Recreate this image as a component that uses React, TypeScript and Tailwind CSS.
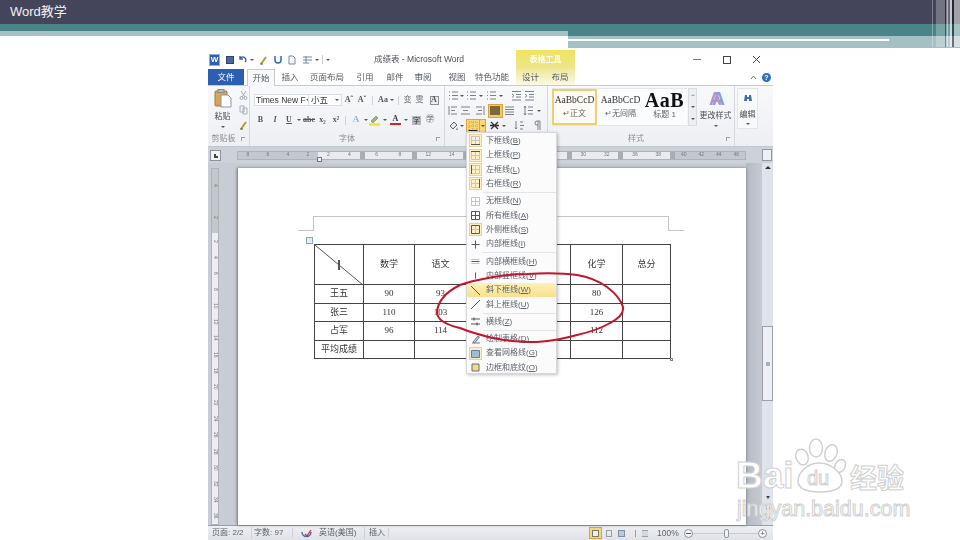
import React from 'react';

const CJK = "font-['Liberation_Sans','Noto_Sans_CJK_SC',sans-serif]";

function Cell({ className = '', children }: { className?: string; children?: React.ReactNode }) {
  return <div className={`flex items-center justify-center shrink-0 h-full ${className}`}>{children}</div>;
}

function Caret() {
  return <span className="block w-0 h-0 border-x-[2px] border-x-transparent border-t-[2px] border-t-[#555]" />;
}

function Lines({ kind }: { kind: string }) {
  const c = '#7b7f88';
  return (
    <svg width="11" height="11" viewBox="0 0 11 11" fill="none" stroke={c} strokeWidth="1">
      {kind === 'left' && <path d="M1 1v9M3 2h6M3 5.500h4M3 9h6" />}
      {kind === 'center' && <path d="M1 2h9M3 5.500h5M1 9h9" />}
      {kind === 'right' && <path d="M10 1v9M2 2h6M4 5.500h4M2 9h6" />}
      {kind === 'justify' && <path d="M1 2h9M1 4.500h9M1 7h9M1 9.500h9" />}
      {kind === 'bullet' && <path d="M1 2h1M4 2h6M1 5.500h1M4 5.500h6M1 9h1M4 9h6" />}
      {kind === 'indent' && <path d="M1 1.500h9M5 4.500h5M5 7h5M1 10h9M1 4l2 1.700L1 7.500" />}
      {kind === 'spacing' && <path d="M2 1v9M1 2.500L2 1l1 1.500M1 8.500L2 10l1-1.500M5 2h5M5 5.500h5M5 9h5" />}
      {kind === 'sort' && <path d="M2 1v8M1 7.500L2 9l1-1.500M6 2h3M6 5.500h4M6 9h3" />}
      {kind === 'mark' && <path d="M6 1v9M8 1v9M5 1H8M5 1a2 2 0 000 4h1" />}
      {kind === 'cross' && <path d="M2 2l7 7M9 2L2 9M1 5.500h9" strokeWidth="1.300" stroke="#333" />}
    </svg>
  );
}

function BorderIcon({ kind, active }: { kind: string; active?: boolean }) {
  const dim = '#c3c5ca';
  const dark = '#55575e';
  return (
    <div className={`w-[13px] h-[13px] flex items-center justify-center ${active ? 'bg-[#fdf0c8] border border-[#efcf8f]' : ''}`}>
      <svg width="11" height="11" viewBox="0 0 11 11" fill="none" strokeWidth="1">
        {!['slash', 'back', 'hline', 'draw', 'grid', 'shade', 'inner', 'ih', 'iv', 'all'].includes(kind) && (
          <path d="M1.500 1.500h8v8h-8zM1.500 5.500h8M5.500 1.500v8" stroke={dim} />
        )}
        {kind === 'bottom' && <path d="M1 9.500h9" stroke={dark} />}
        {kind === 'top' && <path d="M1 1.500h9" stroke={dark} />}
        {kind === 'left' && <path d="M1.500 1v9" stroke={dark} />}
        {kind === 'right' && <path d="M9.500 1v9" stroke={dark} />}
        {kind === 'all' && <path d="M1.500 1.500h8v8h-8zM1.500 5.500h8M5.500 1.500v8" stroke={dark} />}
        {kind === 'out' && <path d="M1.500 1.500h8v8h-8z" stroke={dark} />}
        {kind === 'inner' && <path d="M1.500 5.500h8M5.500 1.500v8" stroke={dark} />}
        {kind === 'ih' && <path d="M1.500 3.500h8M1.500 7.500h8" stroke={dim} />}
        {kind === 'ih' && <path d="M1.500 5.500h8" stroke={dark} />}
        {kind === 'iv' && <path d="M5.500 2.500v6" stroke={dark} />}
        {kind === 'slash' && <path d="M1 1l9 9" stroke={dark} />}
        {kind === 'back' && <path d="M1 10l9-9" stroke={dark} />}
        {kind === 'hline' && <path d="M1 3h9M1 8h9M4 1.500v3M7 6.500v3" stroke={dark} strokeWidth="1.200" />}
        {kind === 'draw' && <path d="M2 9h8M3 8l5-6 1.500 1-5 6z" stroke="#6f7a88" fill="#bcd0e6" />}
        {kind === 'grid' && <path d="M1.500 2.500h8v7h-8z" stroke="#5c7ea8" fill="#9fbbd8" />}
        {kind === 'shade' && <path d="M2 2h7v7H2z" stroke="#6c6f75" fill="#f3d98b" />}
      </svg>
    </div>
  );
}

function MenuItem({ icon, label, hot, active, selected }: { icon: string; label: string; hot: string; active?: boolean; selected?: boolean }) {
  return (
    <div className={`flex items-center h-[14.4px] ${selected ? 'bg-gradient-to-b from-[#fdf1b8] to-[#fae08c]' : ''}`}>
      <div className="w-[16px] flex justify-center shrink-0">
        <BorderIcon kind={icon} active={active} />
      </div>
      <span className="pl-[3px] text-[8px] text-[#5d636b] whitespace-nowrap">
        {label}(<span className="underline">{hot}</span>)
      </span>
    </div>
  );
}

function MenuSep() {
  return (
    <div className="h-[2.8px] flex items-center pl-[16px]">
      <div className="h-px w-full bg-[#e3e4e7]" />
    </div>
  );
}

function BorderMenu() {
  return (
    <div className={`absolute left-[466px] top-[132px] w-[91px] h-[242px] pt-[0.6px] bg-[#fbfbfc] border border-[#d5d7da] shadow-[1px_1px_3px_rgba(0,0,0,0.25)] blur-[0.4px] ${CJK}`}>
      <MenuItem icon="bottom" label="下框线" hot="B" active />
      <MenuItem icon="top" label="上框线" hot="P" active />
      <MenuItem icon="left" label="左框线" hot="L" active />
      <MenuItem icon="right" label="右框线" hot="R" active />
      <MenuSep />
      <MenuItem icon="none" label="无框线" hot="N" />
      <MenuItem icon="all" label="所有框线" hot="A" />
      <MenuItem icon="out" label="外侧框线" hot="S" active />
      <MenuItem icon="inner" label="内部框线" hot="I" />
      <MenuSep />
      <MenuItem icon="ih" label="内部横框线" hot="H" />
      <MenuItem icon="iv" label="内部竖框线" hot="V" />
      <MenuItem icon="slash" label="斜下框线" hot="W" selected />
      <MenuItem icon="back" label="斜上框线" hot="U" />
      <MenuSep />
      <MenuItem icon="hline" label="横线" hot="Z" />
      <MenuSep />
      <MenuItem icon="draw" label="绘制表格" hot="D" />
      <MenuItem icon="grid" label="查看网格线" hot="G" active />
      <MenuItem icon="shade" label="边框和底纹" hot="O" />
    </div>
  );
}

function SlideHeader() {
  return (
    <div className="h-[48px]">
      <div className="h-[24px] bg-[#44455a] pl-[10px] flex items-center">
        <span className={`text-[13px] text-[#f2f2f6] ${CJK}`}>Word教学</span>
      </div>
      <div className="flex h-[24px]">
        <div className="w-[568px]">
          <div className="h-[7px] bg-[#4a8488]" />
          <div className="h-[5px] bg-[#a5c0c4]" />
        </div>
        <div className="flex-1 flex flex-col">
          <div className="h-[12px] bg-[#4a8488]" />
          <div className="h-[3px] bg-[#a5c0c4]" />
          <div className="flex h-[2px]">
            <div className="w-[321px] bg-white" />
            <div className="flex-1 bg-[#a5c0c4]" />
          </div>
          <div className="flex h-[7px]">
            <div className="flex-1 bg-[#a5c0c4]" />
          </div>
        </div>
      </div>
    </div>
  );
}

function CornerStripes() {
  return (
    <div className="absolute right-0 top-0 h-[47px] w-[28px] flex">
      <div className="w-[1px] bg-white/30" />
      <div className="w-[3px]" />
      <div className="w-[9px] bg-white/25" />
      <div className="w-[1px] bg-black/30" />
      <div className="w-[1px] bg-white/30" />
      <div className="w-[1px] bg-white/60" />
      <div className="w-[2px] bg-white/20" />
      <div className="w-[2px] bg-white/70" />
      <div className="w-[2px] bg-black/40" />
      <div className="w-[6px] bg-white/50" />
    </div>
  );
}

function TitleBar() {
  return (
    <div className="h-[19px] flex bg-white">
      <div className="w-[308px] flex items-center relative">
        <div className="ml-[1px] w-[11px] h-[12px] bg-[#2b5fb3] border border-[#8fb0de] flex items-center justify-center text-[8px] leading-none font-bold text-white font-['Liberation_Sans',sans-serif]">W</div>
        <div className="ml-[6px] w-[8px] h-[8px] bg-[#4a66a0] border border-[#2f4670]" />
        <svg className="ml-[5px]" width="9" height="9" viewBox="0 0 9 9" fill="none" stroke="#3c5f9c" strokeWidth="1.400"><path d="M1 4a3 3 0 115 3M1 1v3h3" /></svg>
        <div className="ml-[2px]"><Caret /></div>
        <svg className="ml-[5px]" width="10" height="10" viewBox="0 0 10 10" fill="none"><path d="M2 9l5-7" stroke="#b99a2e" strokeWidth="2" /><path d="M1 9h3" stroke="#555" /></svg>
        <svg className="ml-[5px]" width="8" height="9" viewBox="0 0 8 9" fill="none" stroke="#3569b0" strokeWidth="1.500"><path d="M1 1v4a3 3 0 006 0V1" /></svg>
        <svg className="ml-[6px]" width="8" height="10" viewBox="0 0 8 10" fill="#fff" stroke="#7a8796"><path d="M1 1h4l2 2v6H1z" /></svg>
        <svg className="ml-[6px]" width="11" height="9" viewBox="0 0 11 9" fill="none" stroke="#6d88ab"><path d="M1 2h9M1 5h9M1 8h6M4 1v7" /></svg>
        <div className="ml-[2px]"><Caret /></div>
        <div className="ml-[3px] h-[9px] w-px bg-[#c9ccd1]" />
        <div className="ml-[3px]"><Caret /></div>
        <span className={`absolute left-[166px] text-[8.500px] text-[#4b4f55] whitespace-nowrap ${CJK}`}>成绩表 - Microsoft Word</span>
      </div>
      <div className={`w-[59px] flex items-center justify-center bg-gradient-to-b from-[#f1e25d] to-[#ece68d] text-[8px] font-bold text-white ${CJK}`}>表格工具</div>
      <div className="flex-1 flex items-center">
        <div className="ml-[118px] w-[8px] h-[1.500px] bg-[#777]" />
        <div className="ml-[22px] w-[8px] h-[8px] border border-[#444]" />
        <svg className="ml-[21px]" width="9" height="9" viewBox="0 0 9 9" stroke="#444" strokeWidth="1"><path d="M1 1l7 7M8 1L1 8" /></svg>
      </div>
    </div>
  );
}

function TabBar() {
  const tab = 'flex items-center justify-center shrink-0 h-full text-[8.500px] text-[#555b63] whitespace-nowrap';
  return (
    <div className={`h-[17px] flex bg-white border-b border-[#c7cbd1] ${CJK}`}>
      <div className="w-[36px] h-full bg-[#2c5fb0] text-white text-[8.500px] flex items-center justify-center shrink-0">文件</div>
      <div className="w-[3px] shrink-0" />
      <div className="w-[28px] h-[17px] bg-[#f7f8fa] border-x border-t border-[#c7cbd1] text-[#555b63] text-[8.500px] flex items-center justify-center shrink-0">开始</div>
      <div className={`${tab} w-[30px]`}>插入</div>
      <div className={`${tab} w-[44px]`}>页面布局</div>
      <div className={`${tab} w-[32px]`}>引用</div>
      <div className={`${tab} w-[28px]`}>邮件</div>
      <div className={`${tab} w-[28px]`}>审阅</div>
      <div className={`${tab} w-[40px]`}>视图</div>
      <div className={`${tab} w-[30px]`}>特色功能</div>
      <div className="w-[9px] shrink-0" />
      <div className="flex h-full w-[59px] bg-gradient-to-b from-[#efe89e] to-[#fbf9e6]">
        <div className={`${tab} w-[29px]`}>设计</div>
        <div className={`${tab} w-[30px]`}>布局</div>
      </div>
      <div className="flex-1 flex items-center justify-end pr-[2px] gap-[5px]">
        <svg width="7" height="5" viewBox="0 0 7 5" fill="none" stroke="#777"><path d="M1 4l2.500-3L6 4" /></svg>
        <div className="w-[9px] h-[9px] rounded-full bg-[#2f6fc0] text-white text-[7px] leading-[9px] text-center font-bold">?</div>
      </div>
    </div>
  );
}

function GroupLabel({ children, launcher }: { children: React.ReactNode; launcher?: boolean }) {
  return (
    <div className="h-[14px] relative flex items-center justify-center text-[8px] text-[#8a8f97]">
      {children}
      {launcher && <div className="absolute right-[4px] top-[5px] w-[4px] h-[4px] border-l border-t border-[#9aa0a8]" />}
    </div>
  );
}

function Clipboard() {
  return (
    <div className="w-[42px] shrink-0 flex flex-col border-r border-[#d5d8de]">
      <div className="flex-1 flex">
        <div className="w-[29px] flex flex-col items-center pt-[3px]">
          <svg width="18" height="19" viewBox="0 0 18 19">
            <rect x="1" y="2" width="12" height="15" rx="1" fill="#d7a65b" stroke="#a47a3c" />
            <rect x="4" y="0.500" width="6" height="3" fill="#bcbcbc" stroke="#888" />
            <path d="M7 6h7l3 3v9H7z" fill="#fff" stroke="#8a97a8" />
          </svg>
          <span className="mt-[4px] text-[8px] leading-[10px] text-[#4b4f55]">粘贴</span>
          <div className="mt-[4px]"><Caret /></div>
        </div>
        <div className="flex-1 flex flex-col items-center pt-[4px] gap-[5px] pl-[1px]">
          <svg width="9" height="10" viewBox="0 0 9 10" fill="none" stroke="#a6abb3"><path d="M2 1l4 6M7 1L3 7" /><circle cx="2.500" cy="8" r="1.500" /><circle cx="6.500" cy="8" r="1.500" /></svg>
          <svg width="9" height="10" viewBox="0 0 9 10" fill="#eef1f5" stroke="#aab2bd"><path d="M1 1h4v6H1zM4 3h4v6H4z" /></svg>
          <svg width="9" height="10" viewBox="0 0 9 10" fill="none"><path d="M2 9l5-7" stroke="#b99a2e" strokeWidth="2" /><path d="M1 9h3" stroke="#555" /></svg>
        </div>
      </div>
      <GroupLabel launcher>
        <span className="mr-[10px]">剪贴板</span>
      </GroupLabel>
    </div>
  );
}

function FontGroup() {
  const g = "text-[#555] text-[8px] font-bold font-['Liberation_Serif','Noto_Sans_CJK_SC',serif]";
  return (
    <div className="w-[195px] shrink-0 flex flex-col border-r border-[#d5d8de]">
      <div className="flex-1 pt-[8px] pl-[4px]">
        <div className="flex h-[12px]">
          <div className="w-[55px] h-full bg-white border border-[#d9dce1] flex items-center justify-between pl-[1px] pr-[2px] text-[8.500px] leading-none whitespace-nowrap overflow-hidden text-[#333]">
            <span>Times New F</span><Caret />
          </div>
          <div className="w-[33px] h-full bg-white border-y border-r border-[#d9dce1] flex items-center justify-between pl-[2px] pr-[2px] text-[8.500px] leading-none text-[#333]">
            <span>小五</span><Caret />
          </div>
          <Cell className={`w-[14px] ${g}`}>Aˆ</Cell>
          <Cell className={`w-[12px] ${g}`}>Aˇ</Cell>
          <Cell className="w-[9px]"><div className="w-px h-[9px] bg-[#cfd2d7]" /></Cell>
          <Cell className={`w-[12px] ${g}`}>Aa</Cell>
          <Cell className="w-[6px]"><Caret /></Cell>
          <Cell className="w-[6px]"><div className="w-px h-[9px] bg-[#cfd2d7]" /></Cell>
          <Cell className="w-[13px] text-[8px] text-[#777]">变</Cell>
          <Cell className="w-[11px] text-[8px] text-[#777]">雯</Cell>
          <Cell className="w-[18px]"><div className={`w-[9px] h-[9px] border border-[#8b8f96] bg-[#eee] flex items-center justify-center ${g}`}>A</div></Cell>
        </div>
        <div className="flex h-[12px] mt-[8px]">
          <Cell className={`w-[13px] ${g}`}>B</Cell>
          <Cell className={`w-[16px] ${g} italic`}>I</Cell>
          <Cell className={`w-[12px] ${g} underline`}>U</Cell>
          <Cell className="w-[7px]"><Caret /></Cell>
          <Cell className={`w-[14px] ${g} line-through`}>abc</Cell>
          <Cell className={`w-[13px] ${g}`}>x₂</Cell>
          <Cell className={`w-[14px] ${g}`}>x²</Cell>
          <Cell className="w-[5px]"><div className="w-px h-[9px] bg-[#cfd2d7]" /></Cell>
          <Cell className="w-[16px] text-[9px] font-bold text-[#8fb3de] font-['Liberation_Serif',serif]">A</Cell>
          <Cell className="w-[4px]"><Caret /></Cell>
          <Cell className="w-[13px]">
            <svg width="11" height="11" viewBox="0 0 11 11" fill="none"><path d="M2 6l5-5 2 2-5 5z" fill="#9eb57e" stroke="#777" strokeWidth="0.600" /><path d="M0 9.500h11" stroke="#f2e526" strokeWidth="2.500" /></svg>
          </Cell>
          <Cell className="w-[7px]"><Caret /></Cell>
          <Cell className="w-[15px]">
            <div className="flex flex-col items-center">
              <span className="text-[8px] leading-[8px] font-bold text-[#334] font-['Liberation_Serif',serif]">A</span>
              <span className="block w-[11px] h-[2.500px] bg-[#d8232a]" />
            </div>
          </Cell>
          <Cell className="w-[6px]"><Caret /></Cell>
          <Cell className="w-[15px]"><span className="w-[9px] h-[9px] bg-[#b5b8bd] text-[7px] leading-[9px] text-center text-[#333]">字</span></Cell>
          <Cell className="w-[12px] text-[9px] text-[#666]">㊫</Cell>
        </div>
      </div>
      <GroupLabel launcher>字体</GroupLabel>
    </div>
  );
}

function ParagraphGroup() {
  return (
    <div className="w-[103px] shrink-0 flex flex-col border-r border-[#d5d8de] relative">
      <div className="flex-1 pt-[2px] pl-[2px]">
        <div className="flex h-[15px]">
          <Cell className="w-[12px]"><Lines kind="bullet" /></Cell>
          <Cell className="w-[6px]"><Caret /></Cell>
          <Cell className="w-[13px]"><Lines kind="bullet" /></Cell>
          <Cell className="w-[6px]"><Caret /></Cell>
          <Cell className="w-[14px]"><Lines kind="bullet" /></Cell>
          <Cell className="w-[6px]"><Caret /></Cell>
          <Cell className="w-[6px]" />
          <Cell className="w-[13px]"><Lines kind="indent" /></Cell>
          <Cell className="w-[13px]"><Lines kind="indent" /></Cell>
        </div>
        <div className="flex h-[15px]">
          <Cell className="w-[12px]"><Lines kind="left" /></Cell>
          <Cell className="w-[13px]"><Lines kind="center" /></Cell>
          <Cell className="w-[15px]"><Lines kind="right" /></Cell>
          <Cell className="w-[16px]">
            <div className="w-[15px] h-[14px] bg-[#f6c86a] border border-[#d9a441] flex items-center justify-center">
              <div className="w-[10px] h-[9px] bg-[#7a6a3a]" />
            </div>
          </Cell>
          <Cell className="w-[13px]"><Lines kind="justify" /></Cell>
          <Cell className="w-[6px]" />
          <Cell className="w-[13px]"><Lines kind="spacing" /></Cell>
          <Cell className="w-[7px]"><Caret /></Cell>
        </div>
        <div className="flex h-[15px]">
          <Cell className="w-[12px]">
            <svg width="11" height="11" viewBox="0 0 11 11" fill="none"><path d="M2 6l4-4 3 3-4 4z" fill="#dfe6ef" stroke="#666" /><path d="M9 7l1 3H8z" fill="#5aa75e" /></svg>
          </Cell>
          <Cell className="w-[6px]"><Caret /></Cell>
          <div className="w-[20px] h-[14px] mt-[1px] ml-[1px] flex bg-[#fbd774] border border-[#d9a441] shrink-0">
            <div className="w-[13px] flex items-center justify-center border-r border-[#d9a441]">
              <svg width="10" height="10" viewBox="0 0 10 10" fill="none"><path d="M1 1h8v8H1zM1 5h8M5 1v8" stroke="#b89a5b" strokeDasharray="1 1" /><path d="M0.500 9.500h9" stroke="#222" /></svg>
            </div>
            <div className="flex-1 flex items-center justify-center"><Caret /></div>
          </div>
          <Cell className="w-[16px]"><Lines kind="cross" /></Cell>
          <Cell className="w-[4px]"><Caret /></Cell>
          <Cell className="w-[6px]" />
          <Cell className="w-[14px]"><Lines kind="sort" /></Cell>
          <Cell className="w-[5px]" />
          <Cell className="w-[13px]"><Lines kind="mark" /></Cell>
        </div>
      </div>
      <GroupLabel>{' '}</GroupLabel>
    </div>
  );
}

function StylesGroup() {
  return (
    <div className="w-[187px] shrink-0 flex flex-col border-r border-[#d5d8de]">
      <div className="flex-1 flex pt-[2px] pl-[4px]">
        <div className="w-[136px] h-[38px] flex items-start bg-[#fbfcfd] border-y border-[#e4e6ea]">
          <div className="w-[45px] h-[36px] border-2 border-[#eccf72] bg-[#fdfbf3] flex flex-col items-center shrink-0">
            <span className="mt-[4px] text-[9.500px] leading-[11px] text-[#333] font-['Liberation_Serif',serif] whitespace-nowrap">AaBbCcD</span>
            <span className="mt-[3px] text-[8px] leading-[10px] text-[#666]">↵正文</span>
          </div>
          <div className="w-[47px] flex flex-col items-center shrink-0">
            <span className="mt-[6px] text-[9.500px] leading-[11px] text-[#333] font-['Liberation_Serif',serif] whitespace-nowrap">AaBbCcD</span>
            <span className="mt-[3px] text-[8px] leading-[10px] text-[#666]">↵无间隔</span>
          </div>
          <div className="w-[41px] flex flex-col items-center shrink-0 overflow-hidden">
            <span className="mt-[1px] text-[20px] leading-[20px] tracking-[0.500px] font-bold text-[#111] font-['Liberation_Serif',serif] whitespace-nowrap">AaB</span>
            <span className="text-[8px] leading-[10px] text-[#666]">标题 1</span>
          </div>
        </div>
        <div className="w-[9px] ml-[1px] h-[38px] flex flex-col bg-[#eceef2] border border-[#d9dce1] items-center justify-around">
          <span className="block w-0 h-0 border-x-[2px] border-x-transparent border-b-[2px] border-b-[#aaa]" />
          <Caret />
          <Caret />
        </div>
        <div className="w-[37px] flex flex-col items-center pt-[2px]">
          <span className="text-[18px] leading-[18px] font-bold text-[#b690c9] font-['Liberation_Sans',sans-serif] [text-shadow:3px_0_0_#7ba4d8]">A</span>
          <span className="mt-[3px] text-[8px] leading-[10px] text-[#4b4f55] whitespace-nowrap">更改样式</span>
          <div className="mt-[4px]"><Caret /></div>
        </div>
      </div>
      <GroupLabel launcher>
        <span className="mr-[10px]">样式</span>
      </GroupLabel>
    </div>
  );
}

function EditingGroup() {
  return (
    <div className="flex-1 pt-[2px] pl-[2px]">
      <div className="w-[21px] h-[41px] bg-[#f8f9fb] border border-[#e2e5e9] flex flex-col items-center pt-[4px]">
        <svg width="10" height="10" viewBox="0 0 10 10" fill="#3f6ea8"><path d="M1 8l1-6h2v6zM6 8V2h2l1 6z" /><path d="M4 4h2v2H4z" /></svg>
        <span className="mt-[7px] text-[8px] leading-[10px] text-[#4b4f55]">编辑</span>
        <div className="mt-[3px]"><Caret /></div>
      </div>
    </div>
  );
}

function Ribbon() {
  return (
    <div className={`h-[61px] flex bg-gradient-to-b from-[#f8f9fb] to-[#edeff3] border-b border-[#c3c7ce] ${CJK}`}>
      <Clipboard />
      <FontGroup />
      <ParagraphGroup />
      <StylesGroup />
      <EditingGroup />
    </div>
  );
}

function RulerNums({ nums }: { nums: number[] }) {
  return (
    <div className="flex-1 flex justify-around items-center text-[5px] text-[#777] font-['Liberation_Sans',sans-serif]">
      {nums.map((n, i) => <span key={i}>{n}</span>)}
    </div>
  );
}

function RulerMark() {
  return <div className="w-[5px] h-full bg-[#a9adb4] shrink-0" />;
}

function RulerRow() {
  // the numbers from 465 to 569 lie behind the open menu
  const segs = [[6, 8], [12, 14], [], [], [30, 32], [36, 38]];
  return (
    <div className="h-[16px] flex items-center bg-[#cdd1d8]">
      <div className="w-[29px] shrink-0 pl-[2px]">
        <div className="w-[11px] h-[11px] bg-[#f2f3f5] border border-[#8d939c] flex items-end justify-center pb-[2px]">
          <div className="w-[4px] h-[4px] border-l-2 border-b-2 border-[#444]" />
        </div>
      </div>
      <div className="w-[509px] h-[9px] flex border border-[#aeb2b9] relative">
        <div className="w-[80px] flex bg-[#c3c7ce]"><RulerNums nums={[8, 6, 4, 2]} /></div>
        <div className="w-[352px] flex bg-[#e9ebee]">
          <div className="w-[42px] flex"><RulerNums nums={[2, 4]} /></div>
          {segs.map((s, i) => (
            <React.Fragment key={i}>
              <RulerMark />
              <RulerNums nums={s} />
            </React.Fragment>
          ))}
        </div>
        <RulerMark />
        <div className="flex-1 flex bg-[#c3c7ce]"><RulerNums nums={[40, 42, 44, 46]} /></div>
        <div className="absolute left-[79px] top-[5px] w-[5px] h-[5px] bg-[#eef0f3] border border-[#777]" />
      </div>
      <div className="w-[16px] shrink-0" />
      <div className="w-[10px] h-[12px] bg-[#eef0f4] border border-[#9298a1]" />
    </div>
  );
}

function VerticalRuler() {
  const top = [4, 2];
  const nums = Array.from({ length: 18 }, (_, i) => (i + 1) * 2);
  const cell = "flex-1 flex items-center justify-center text-[5px] text-[#777] [writing-mode:vertical-rl] font-['Liberation_Sans',sans-serif]";
  return (
    <div className="ml-[3px] mt-[5px] w-[8px] flex-1 flex flex-col border border-[#aeb2b9]">
      <div className="h-[64px] flex flex-col bg-[#c3c7ce]">
        {top.map((n) => <div key={n} className={cell}>{n}</div>)}
      </div>
      <div className="flex-1 flex flex-col bg-[#eceef1]">
        {nums.map((n) => <div key={n} className={cell}>{n}</div>)}
      </div>
    </div>
  );
}

function ScoreTable() {
  const td = 'border border-[#444] text-center p-0';
  return (
    <table className="ml-[76px] border-collapse table-fixed w-[356px] text-[9px] text-[#333] relative">
      <tbody>
        <tr className="h-[40px]">
          <td className={`${td} w-[49px] relative`}>
            <svg className="absolute left-0 top-0" width="48" height="40" viewBox="0 0 48 40"><path d="M0 0L48 40" stroke="#555" /></svg>
            <span className="block w-[2px] h-[10px] mx-auto bg-[#555]" />
          </td>
          <td className={`${td} w-[51px]`}>数学</td>
          <td className={`${td} w-[52px]`}>语文</td>
          <td className={`${td} w-[52px]`} />
          <td className={`${td} w-[52px]`} />
          <td className={`${td} w-[52px]`}>化学</td>
          <td className={`${td} w-[48px]`}>总分</td>
        </tr>
        {[
          ['王五', '90', '93', '', '', '80', ''],
          ['张三', '110', '103', '', '', '126', ''],
          ['占军', '96', '114', '', '', '112', ''],
          ['平均成绩', '', '', '', '', '', ''],
        ].map((r, i) => (
          <tr key={r[0]} className={i % 2 === 0 ? 'h-[19px]' : 'h-[18px]'}>
            {r.map((c, j) => (
              <td key={j} className={`${td} font-['Liberation_Serif','Noto_Sans_CJK_SC',serif]`}>{c}</td>
            ))}
          </tr>
        ))}
      </tbody>
    </table>
  );
}

function DocArea() {
  return (
    <div className="h-[362px] flex bg-[#c8ccd4]">
      <div className="w-[29px] shrink-0 flex flex-col">
        <VerticalRuler />
      </div>
      <div className={`w-[509px] mt-[5px] bg-white border-l border-[#8b8f96] shadow-[0_0_3px_rgba(0,0,0,0.4)] relative ${CJK}`}>
        <div className="h-[48px]" />
        <div className="flex h-[15px] ml-[60px]">
          <div className="w-[15px] border-b border-[#c4c4c4]" />
          <div className="w-[356px] border-t border-x border-[#c4c4c4]" />
          <div className="w-[15px] border-b border-[#c4c4c4]" />
        </div>
        <div className="h-[13px]" />
        <ScoreTable />
        <div className="absolute left-[68px] top-[69px] w-[7px] h-[7px] bg-[#e3ecf7] border border-[#8aa3c4]" />
        <div className="absolute left-[432px] top-[190px] w-[3px] h-[3px] border border-[#888]" />
      </div>
      <div className="w-[16px] shrink-0 bg-gradient-to-r from-[#b6bac2] to-[#c6cad2]" />
      <div className="w-[11px] shrink-0 bg-[#dfe3ec] flex flex-col items-center pt-[3px]">
        <span className="block w-0 h-0 border-x-[3px] border-x-transparent border-b-[3px] border-b-[#333]" />
        <div className="mt-[157px] w-full h-[75px] bg-[#eef0f5] border border-[#9aa1ab] flex items-center justify-center">
          <div className="w-[4px] h-[4px] bg-[#aab0b9]" />
        </div>
        <div className="mt-[95px] flex flex-col items-center">
          <span className="block w-0 h-0 border-x-[2px] border-x-transparent border-t-[3px] border-t-[#444]" />
          <div className="mt-[7px] w-[4px] h-[4px] rounded-full border border-[#666]" />
          <span className="mt-[7px] block w-0 h-0 border-x-[2px] border-x-transparent border-t-[3px] border-t-[#444]" />
        </div>
      </div>
    </div>
  );
}

function StatusBar() {
  return (
    <div className={`h-[15px] flex items-center bg-gradient-to-b from-[#eef0f3] to-[#dfe2e7] border-t border-[#989da6] text-[8px] text-[#5d6269] whitespace-nowrap ${CJK}`}>
      <span className="w-[43px] pl-[4px]">页面: 2/2</span>
      <span className="w-[41px] pl-[2px] border-l border-[#cfd2d8]">字数: 97</span>
      <div className="w-[27px] flex items-center justify-center border-l border-[#cfd2d8]">
        <svg width="11" height="10" viewBox="0 0 11 10" fill="none"><path d="M1 4a4.500 4.500 0 009 0" stroke="#4b6ea8" strokeWidth="1.500" /><path d="M4 6l2 2 4-6" stroke="#d0342f" strokeWidth="1.300" /></svg>
      </div>
      <span className="w-[45px]">英语(美国)</span>
      <span className="w-[24px] pl-[4px] border-l border-[#cfd2d8]">插入</span>
      <div className="w-[201px] border-l border-[#cfd2d8] h-[10px]" />
      <div className="w-[13px] h-[12px] bg-[#f7d77c] border border-[#d9a441] flex items-center justify-center">
        <div className="w-[7px] h-[7px] border border-[#777] bg-[#f5efd9]" />
      </div>
      <div className="ml-[4px] flex gap-[6px]">
        <div className="w-[6px] h-[7px] border border-[#9aa0a8]" />
        <div className="w-[7px] h-[7px] border border-[#7d8ea8] bg-[#b9c8dc]" />
        <div className="w-[5px] h-[7px] border-r border-[#9aa0a8]" />
        <div className="w-[6px] h-[7px] border-y border-[#9aa0a8] bg-[#d5d8dd]" />
      </div>
      <span className="ml-[9px] text-[8.500px] w-[24px]">100%</span>
      <div className="ml-[3px] w-[9px] h-[9px] rounded-full border border-[#8d929a] bg-[#f5f6f8] flex items-center justify-center">
        <div className="w-[5px] h-px bg-[#555]" />
      </div>
      <div className="w-[65px] flex items-center relative">
        <div className="w-full h-px bg-[#c9ccd2]" />
        <div className="absolute left-[31px] -top-[4px] w-[5px] h-[9px] rounded-[2px] bg-[#f3f4f6] border border-[#9298a1]" />
      </div>
      <div className="w-[9px] h-[9px] rounded-full border border-[#8d929a] bg-[#f5f6f8] text-[8px] leading-[7px] text-center text-[#555]">+</div>
    </div>
  );
}

function WordWindow() {
  return (
    <div className="ml-[208px] mt-[2px] w-[565px] h-[490px] flex flex-col blur-[0.4px]">
      <TitleBar />
      <TabBar />
      <Ribbon />
      <RulerRow />
      <DocArea />
      <StatusBar />
    </div>
  );
}

function RedCircle() {
  return (
    <svg className="absolute left-0 top-0" width="960" height="540" viewBox="0 0 960 540" fill="none">
      <path
        d="M437 312 C438 300 448 291 460 285 C470 281 482 279 493 277 C505 275 516 274 527 274 C545 273 562 273 577 275 C590 277 600 282 607 287 C615 293 621 300 623 307 C624 313 618 319 610 323 C600 329 590 332 577 335 C563 339 550 341 537 342 C520 342 506 341 493 338 C480 335 470 332 460 328 C447 325 437 320 437 312 Z"
        stroke="#c3162c"
        strokeWidth="2"
      />
    </svg>
  );
}

function Watermark() {
  const outline = 'text-white [-webkit-text-stroke:1px_#d0d0d0]';
  return (
    <div className="absolute left-[735px] top-[437px] w-[175px] h-[85px] font-['Liberation_Sans',sans-serif]">
      <div className="flex h-[60px]">
        <span className={`mt-[19px] ml-[1px] w-[59px] text-[37px] leading-[40px] font-bold ${outline}`}>Bai</span>
        <div className="relative w-[52px] h-[60px] shrink-0">
          <svg className="absolute left-0 top-0" width="52" height="60" viewBox="0 0 52 60" fill="#fff" stroke="#d0d0d0" strokeWidth="1.500">
            <ellipse cx="7" cy="20" rx="6" ry="8" transform="rotate(-20 7 20)" />
            <ellipse cx="21" cy="11" rx="6.500" ry="9" />
            <ellipse cx="36" cy="16" rx="6" ry="8.500" transform="rotate(20 36 16)" />
            <ellipse cx="45" cy="29" rx="5" ry="7" transform="rotate(30 45 29)" />
            <path d="M3 44C3 36 12 26 24 26C36 26 47 36 47 44C47 52 38 55 25 55C12 55 3 52 3 44Z" />
          </svg>
          <span className={`absolute left-[12px] top-[30px] text-[20px] leading-[22px] ${outline} [-webkit-text-stroke-width:0.800px]`}>du</span>
        </div>
        <span className={`mt-[23px] ml-[3px] text-[27px] leading-[34px] whitespace-nowrap font-bold ${outline} font-['Noto_Sans_CJK_SC',sans-serif]`}>经验</span>
      </div>
      <div className={`ml-[2px] text-[21.500px] leading-[25px] whitespace-nowrap ${outline} [-webkit-text-stroke-width:0.700px]`}>jingyan.baidu.com</div>
    </div>
  );
}

export default function App() {
  return (
    <div className="relative w-[960px] h-[540px] overflow-hidden bg-white">
      <SlideHeader />
      <CornerStripes />
      <WordWindow />
      <BorderMenu />
      <RedCircle />
      <Watermark />
    </div>
  );
}
